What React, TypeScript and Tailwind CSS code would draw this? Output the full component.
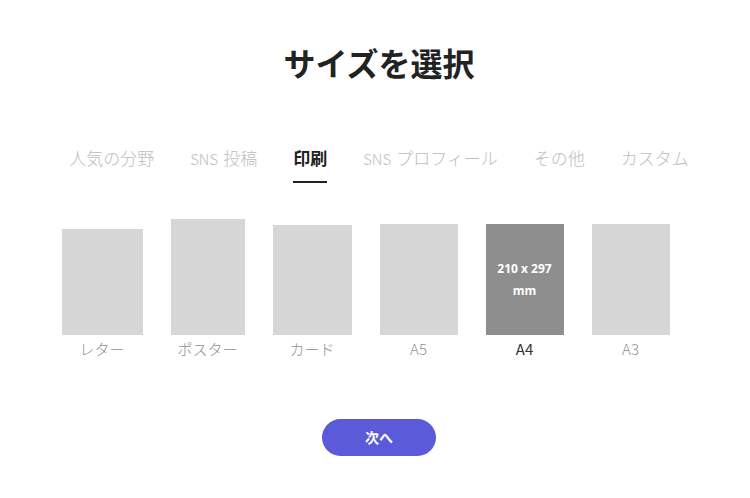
import { useState } from "react";

const tabs = ["人気の分野", "SNS 投稿", "印刷", "SNS プロフィール", "その他", "カスタム"];

const sizes = [
  { name: "レター", w: "w-[81px]", h: "h-[106px]", dims: "216 x 279" },
  { name: "ポスター", w: "w-[74px]", h: "h-[116px]", dims: "457 x 610" },
  { name: "カード", w: "w-[79px]", h: "h-[110px]", dims: "127 x 178" },
  { name: "A5", w: "w-[78px]", h: "h-[111px]", dims: "148 x 210" },
  { name: "A4", w: "w-[78px]", h: "h-[111px]", dims: "210 x 297" },
  { name: "A3", w: "w-[78px]", h: "h-[111px]", dims: "297 x 420" },
];

function TabLabel({ text }: { text: string }) {
  if (!text.startsWith("SNS ")) return <>{text}</>;
  return (
    <>
      <span className="mr-[5px] text-[15px]">SNS</span>
      {text.slice(4)}
    </>
  );
}

export default function App() {
  const [tab, setTab] = useState("印刷");
  const [selected, setSelected] = useState("A4");

  return (
    <div className="flex min-h-[498px] w-full flex-col items-center bg-white font-['Noto_Sans_CJK_JP',sans-serif]">
      <h1 className="mt-[42px] pl-[8px] text-[32px] leading-[40px] font-bold text-[#222]">サイズを選択</h1>

      <div className="mt-[64px] flex h-[37px] gap-[36px] pl-[8px]">
        {tabs.map((t) => (
          <button
            key={t}
            onClick={() => setTab(t)}
            className={
              t === tab
                ? "h-[37px] border-b-2 border-[#222] pb-[11px] text-[17px] leading-[24px] font-bold text-[#222]"
                : "h-[37px] border-b-2 border-transparent pb-[11px] text-[17px] leading-[24px] font-light text-[#bdbdbd]"
            }
          >
            <TabLabel text={t} />
          </button>
        ))}
      </div>

      <div className="mt-[36px] flex items-end gap-[28px] pr-[19px]">
        {sizes.map((s) => (
          <button key={s.name} onClick={() => setSelected(s.name)} className="flex flex-col items-center">
            <div
              className={`${s.w} ${s.h} flex flex-col items-center justify-center ${
                s.name === selected ? "bg-[#8e8e8e]" : "bg-[#d6d6d6]"
              }`}
            >
              {s.name === selected && (
                <span className="font-['Open_Sans',sans-serif] text-[12px] leading-[22px] font-bold text-white">
                  {s.dims}
                  <br />
                  mm
                </span>
              )}
            </div>
            <span
              className={`mt-[4px] text-[15px] leading-[20px] ${
                s.name === selected ? "text-[#333]" : "font-light text-[#8f8f8f]"
              }`}
            >
              {s.name}
            </span>
          </button>
        ))}
      </div>

      <button className="mt-[60px] ml-[8px] h-[37px] w-[114px] rounded-full bg-[#5b5bd9] text-[14px] font-bold text-white">
        次へ
      </button>
    </div>
  );
}
